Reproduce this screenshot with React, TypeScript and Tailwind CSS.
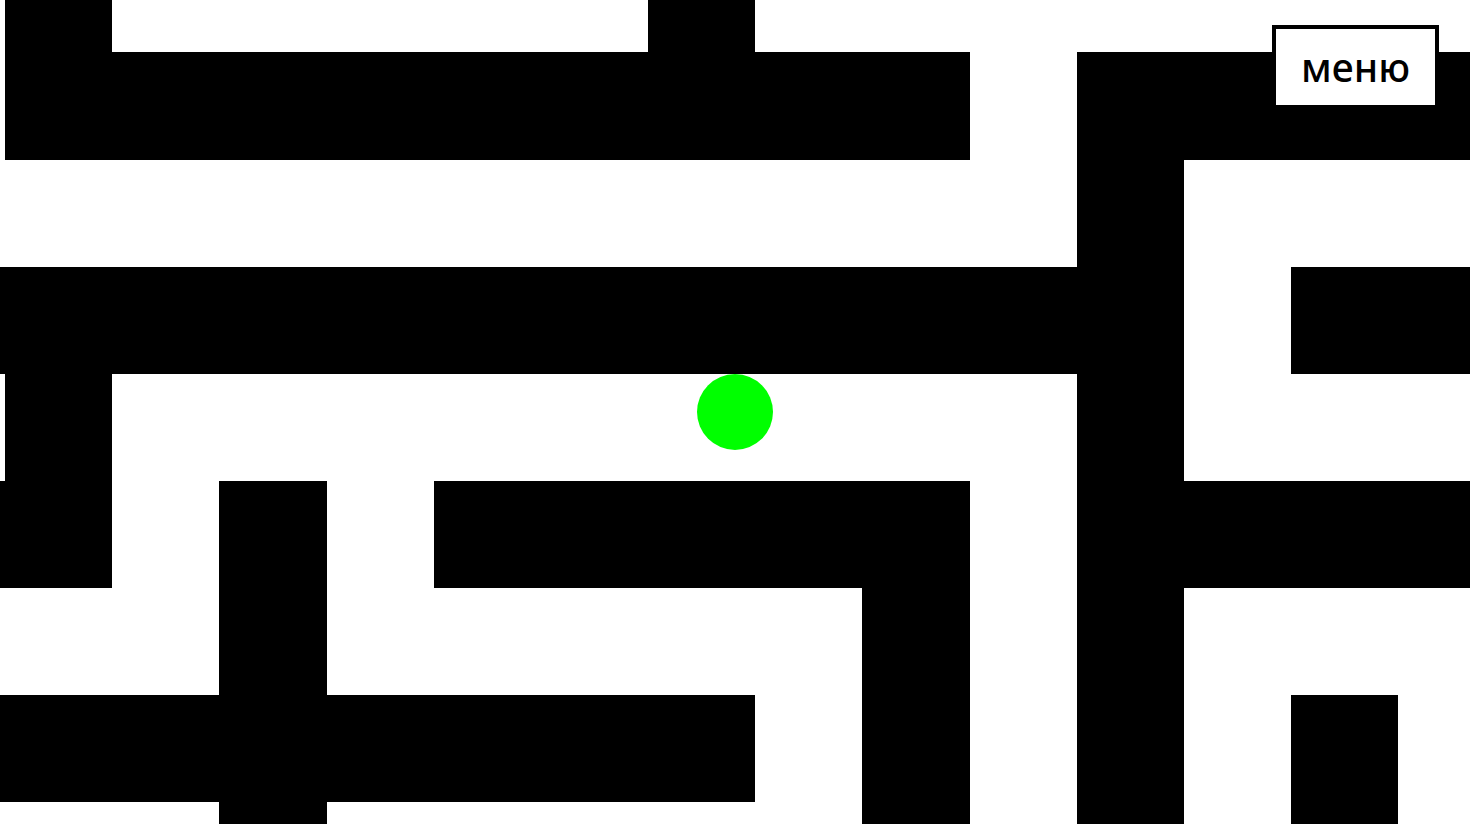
import React from "react";

const XS = [0, 5, 112, 219, 327, 434, 541, 648, 755, 862, 970, 1077, 1184, 1291, 1398, 1505];
const YS = [-55, 52, 160, 267, 374, 481, 588, 695, 802, 909];

// rows indexed from -1; cols indexed from -1. each entry: [row, colStart, colEnd] inclusive
const runs: [number, number, number][] = [
  [-1, 0, 0],
  [-1, 6, 6],
  [0, 0, 8],
  [0, 10, 13],
  [1, 10, 10],
  [2, -1, 10],
  [2, 12, 13],
  [3, 0, 0],
  [3, 10, 10],
  [4, -1, 0],
  [4, 2, 2],
  [4, 4, 8],
  [4, 10, 13],
  [5, 2, 2],
  [5, 8, 8],
  [5, 10, 10],
  [6, -1, 6],
  [6, 8, 8],
  [6, 10, 10],
  [6, 12, 12],
  [7, 2, 2],
  [7, 8, 8],
  [7, 10, 10],
  [7, 12, 12],
];

export default function App() {
  return (
    <div className="relative w-[1470px] h-[824px] overflow-hidden bg-white">
      <svg width="1470" height="824" viewBox="0 0 1470 824" className="block">
        {runs.map(([r, c0, c1], i) => {
          const x = XS[c0 + 1];
          const x2 = XS[c1 + 2];
          const y = YS[r + 1];
          const y2 = YS[r + 2];
          return <rect key={i} x={x} y={y} width={x2 - x} height={y2 - y} fill="#000" shapeRendering="crispEdges" />;
        })}
        <circle cx="735" cy="412" r="38" fill="#00ff00" />
      </svg>
      <button className="absolute left-[1272px] top-[25px] w-[167px] h-[84px] bg-white border-4 border-black flex items-center justify-center text-[39px] font-medium text-black leading-none font-['Noto_Sans',sans-serif] pb-[2px]">
        меню
      </button>
    </div>
  );
}
